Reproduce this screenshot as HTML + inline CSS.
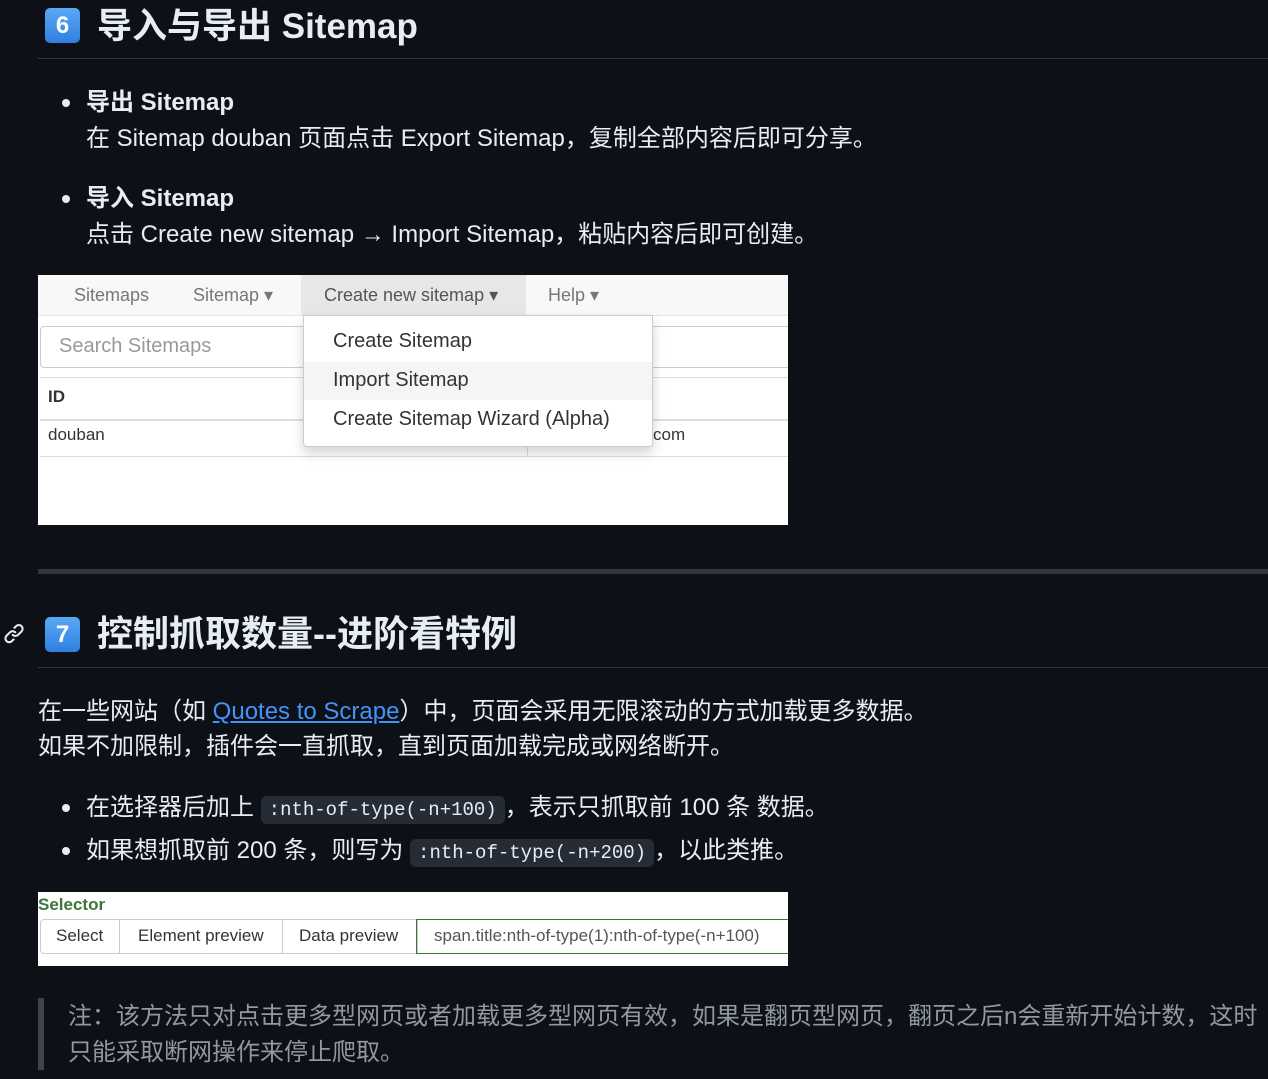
<!DOCTYPE html>
<html><head><meta charset="utf-8"><style>
body{margin:0;width:1268px;height:1079px;background:#0d1117;overflow:hidden;position:relative;font-family:"Liberation Sans","Noto Sans CJK SC",sans-serif;color:#e6edf3}
.a{position:absolute;white-space:nowrap}
.badge{position:absolute;width:35px;height:35px;border-radius:5px;background:linear-gradient(#5aa9f5,#2f7fe0);color:#fff;font-weight:bold;font-size:24px;text-align:center;line-height:35px}
.t{font-size:24px;line-height:30px}
.dot{position:absolute;width:8px;height:8px;border-radius:50%;background:#e6edf3}
code{font-family:"Liberation Mono",monospace;font-size:19px;background:#262c36;border-radius:6px;padding:3px 8px}
.sa{font-family:"Liberation Sans",sans-serif;color:#555}
</style></head><body>
<div class="badge" style="left:45px;top:8px">6</div>
<div class="a" style="left:97px;top:5px;font-size:35px;font-weight:bold;line-height:44px">导入与导出 Sitemap</div>
<div class="a" style="left:38px;top:58px;width:1230px;height:1px;background:#30363d"></div>
<div class="dot" style="left:62px;top:99px"></div>
<div class="a t" style="left:86px;top:88px;font-weight:bold">导出 Sitemap</div>
<div class="a t" style="left:86px;top:124px">在 Sitemap douban 页面点击 Export Sitemap，复制全部内容后即可分享。</div>
<div class="dot" style="left:62px;top:195px"></div>
<div class="a t" style="left:86px;top:184px;font-weight:bold">导入 Sitemap</div>
<div class="a t" style="left:86px;top:220px">点击 Create new sitemap → Import Sitemap，粘贴内容后即可创建。</div>

<div class="a" style="left:38px;top:275px;width:750px;height:250px;background:#fff;overflow:hidden">
 <div class="a" style="left:0;top:0;width:750px;height:40px;background:#f8f8f8;border-bottom:1px solid #e7e7e7"></div>
 <div class="a" style="left:263px;top:0;width:225px;height:40px;background:#e7e7e7"></div>
 <div class="a sa" style="left:36px;top:10px;font-size:18px;color:#777">Sitemaps</div>
 <div class="a sa" style="left:155px;top:10px;font-size:18px;color:#777">Sitemap ▾</div>
 <div class="a sa" style="left:286px;top:10px;font-size:18px">Create new sitemap ▾</div>
 <div class="a sa" style="left:510px;top:10px;font-size:18px;color:#777">Help ▾</div>
 <div class="a" style="left:2px;top:51px;width:760px;height:40px;border:1px solid #ccc;border-radius:4px"></div>
 <div class="a sa" style="left:21px;top:60px;font-size:20px;color:#999">Search Sitemaps</div>
 <div class="a" style="left:2px;top:102px;width:750px;height:80px;border-top:1px solid #ddd"></div>
 <div class="a" style="left:2px;top:144px;width:750px;height:2px;background:#ddd"></div>
 <div class="a" style="left:2px;top:181px;width:750px;height:1px;background:#ddd"></div>
 <div class="a" style="left:489px;top:146px;width:1px;height:36px;background:#ddd"></div>
 <div class="a sa" style="left:10px;top:112px;font-size:17px;font-weight:bold;color:#333">ID</div>
 <div class="a sa" style="left:10px;top:150px;font-size:17px;color:#333">douban</div>
 <div class="a sa" style="left:615px;top:150px;font-size:17px;color:#333">com</div>
 <div class="a" style="left:265px;top:40px;width:348px;height:130px;background:#fff;border:1px solid #ccc;border-radius:0 0 4px 4px;box-shadow:0 6px 12px rgba(0,0,0,.18)">
  <div class="a" style="left:0;top:46px;width:348px;height:38px;background:#f5f5f5"></div>
  <div class="a sa" style="left:29px;top:14px;font-size:20px;color:#333">Create Sitemap</div>
  <div class="a sa" style="left:29px;top:53px;font-size:20px;color:#333">Import Sitemap</div>
  <div class="a sa" style="left:29px;top:92px;font-size:20px;color:#333">Create Sitemap Wizard (Alpha)</div>
 </div>
</div>

<div class="a" style="left:38px;top:569px;width:1230px;height:5px;background:#30363d"></div>
<svg class="a" style="left:3px;top:622px" width="22" height="22" viewBox="0 0 16 16"><path fill="#e6edf3" d="M7.78 3.72l1.25-1.25a3.5 3.5 0 0 1 4.950 4.95l-2.5 2.5a3.5 3.5 0 0 1-4.95 0 .75.75 0 0 1 1.06-1.06 2 2 0 0 0 2.83 0l2.5-2.5a2 2 0 0 0-2.83-2.83L8.84 4.780a.75.75 0 0 1-1.06-1.06zm-4.69 9.64a2 2 0 0 0 2.83 0l1.25-1.25a.75.75 0 0 1 1.06 1.06l-1.25 1.25a3.5 3.5 0 0 1-4.95-4.95l2.5-2.5a3.5 3.5 0 0 1 4.95 0 .75.75 0 0 1-1.06 1.06 2 2 0 0 0-2.83 0l-2.5 2.5a2 2 0 0 0 0 2.83z"/></svg>
<div class="badge" style="left:45px;top:617px">7</div>
<div class="a" style="left:97px;top:612px;font-size:36px;font-weight:bold;line-height:44px">控制抓取数量--进阶看特例</div>
<div class="a" style="left:38px;top:667px;width:1230px;height:1px;background:#30363d"></div>
<div class="a t" style="left:38px;top:697px">在一些网站（如 <span style="color:#4493f8;text-decoration:underline">Quotes to Scrape</span>）中，页面会采用无限滚动的方式加载更多数据。</div>
<div class="a t" style="left:38px;top:732px">如果不加限制，插件会一直抓取，直到页面加载完成或网络断开。</div>
<div class="dot" style="left:62px;top:804px"></div>
<div class="a t" style="left:86px;top:793px">在选择器后加上 <code>:nth-of-type(-n+100)</code>，表示只抓取前 100 条 数据。</div>
<div class="dot" style="left:62px;top:847px"></div>
<div class="a t" style="left:86px;top:836px">如果想抓取前 200 条，则写为 <code>:nth-of-type(-n+200)</code>，以此类推。</div>

<div class="a" style="left:38px;top:892px;width:750px;height:74px;background:#fff;overflow:hidden">
 <div class="a sa" style="left:0;top:3px;font-size:17px;font-weight:bold;color:#3c763d">Selector</div>
 <div class="a" style="left:2px;top:27px;width:376px;height:33px;border:1px solid #ccc;border-radius:4px 0 0 4px;background:#fff"></div>
 <div class="a" style="left:81px;top:27px;width:1px;height:35px;background:#ccc"></div>
 <div class="a" style="left:244px;top:27px;width:1px;height:35px;background:#ccc"></div>
 <div class="a" style="left:378px;top:27px;width:372px;height:33px;border:1px solid #3c763d;border-right:none"></div>
 <div class="a sa" style="left:18px;top:34px;font-size:17px;color:#333">Select</div>
 <div class="a sa" style="left:100px;top:34px;font-size:17px;color:#333">Element preview</div>
 <div class="a sa" style="left:261px;top:34px;font-size:17px;color:#333">Data preview</div>
 <div class="a sa" style="left:396px;top:34px;font-size:17px">span.title:nth-of-type(1):nth-of-type(-n+100)</div>
</div>

<div class="a" style="left:38px;top:998px;width:6px;height:72px;background:#3d444d"></div>
<div class="a t" style="left:68px;top:1002px;color:#9198a1">注：该方法只对点击更多型网页或者加载更多型网页有效，如果是翻页型网页，翻页之后n会重新开始计数，这时</div>
<div class="a t" style="left:68px;top:1038px;color:#9198a1">只能采取断网操作来停止爬取。</div>
</body></html>
